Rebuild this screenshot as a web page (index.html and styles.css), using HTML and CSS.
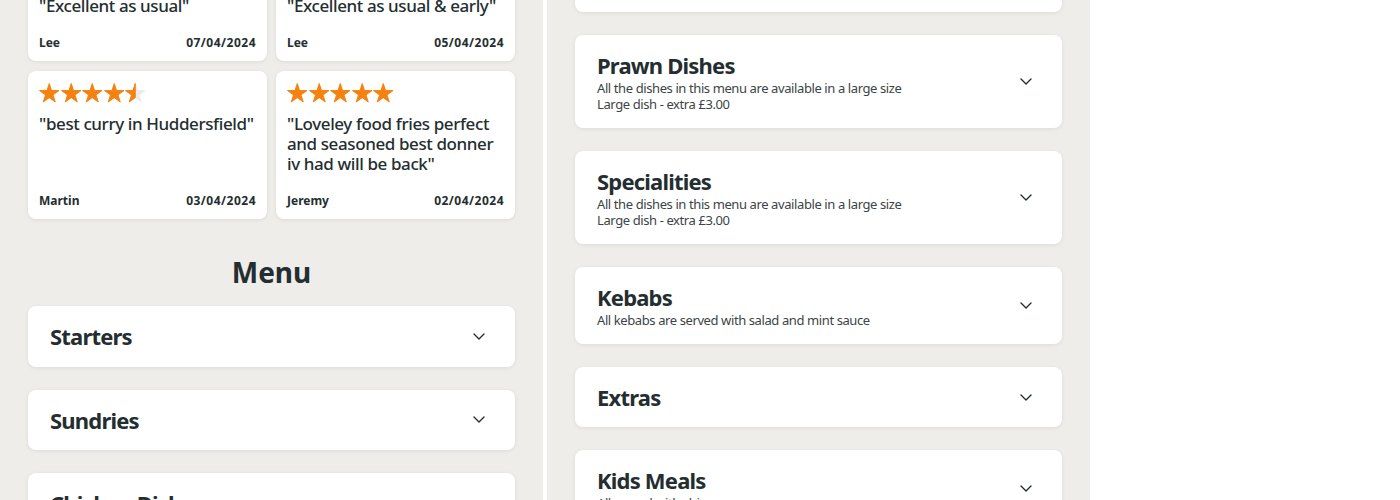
FILE: index.html
```html
<!DOCTYPE html>
<html lang="en">
<head>
<meta charset="utf-8">
<title>Menu</title>
<link rel="stylesheet" href="styles.css">
</head>
<body>
<div class="page">
  <section class="panel panel-left">
    <div class="reviews">
      <article class="review">
        <div class="stars">
          <svg class="star" viewBox="-0.5 -0.5 21 20"><path d="M10 0L12.36 7.26H20L13.81 11.74L16.17 19L10 14.51L3.83 19L6.19 11.74L0 7.26H7.64Z"/></svg>
          <svg class="star" viewBox="-0.5 -0.5 21 20"><path d="M10 0L12.36 7.26H20L13.81 11.74L16.17 19L10 14.51L3.83 19L6.19 11.74L0 7.26H7.64Z"/></svg>
          <svg class="star" viewBox="-0.5 -0.5 21 20"><path d="M10 0L12.36 7.26H20L13.81 11.74L16.17 19L10 14.51L3.83 19L6.19 11.74L0 7.26H7.64Z"/></svg>
          <svg class="star" viewBox="-0.5 -0.5 21 20"><path d="M10 0L12.36 7.26H20L13.81 11.74L16.17 19L10 14.51L3.83 19L6.19 11.74L0 7.26H7.64Z"/></svg>
          <svg class="star" viewBox="-0.5 -0.5 21 20"><path d="M10 0L12.36 7.26H20L13.81 11.74L16.17 19L10 14.51L3.83 19L6.19 11.74L0 7.26H7.64Z"/></svg>
        </div>
        <p class="review-text">"Excellent as usual"</p>
        <div class="review-meta"><span class="review-name">Lee</span><span class="review-date">07/04/2024</span></div>
      </article>
      <article class="review">
        <div class="stars">
          <svg class="star" viewBox="-0.5 -0.5 21 20"><path d="M10 0L12.36 7.26H20L13.81 11.74L16.17 19L10 14.51L3.83 19L6.19 11.74L0 7.26H7.64Z"/></svg>
          <svg class="star" viewBox="-0.5 -0.5 21 20"><path d="M10 0L12.36 7.26H20L13.81 11.74L16.17 19L10 14.51L3.83 19L6.19 11.74L0 7.26H7.64Z"/></svg>
          <svg class="star" viewBox="-0.5 -0.5 21 20"><path d="M10 0L12.36 7.26H20L13.81 11.74L16.17 19L10 14.51L3.83 19L6.19 11.74L0 7.26H7.64Z"/></svg>
          <svg class="star" viewBox="-0.5 -0.5 21 20"><path d="M10 0L12.36 7.26H20L13.81 11.74L16.17 19L10 14.51L3.83 19L6.19 11.74L0 7.26H7.64Z"/></svg>
          <svg class="star" viewBox="-0.5 -0.5 21 20"><path d="M10 0L12.36 7.26H20L13.81 11.74L16.17 19L10 14.51L3.83 19L6.19 11.74L0 7.26H7.64Z"/></svg>
        </div>
        <p class="review-text">"Excellent as usual &amp; early"</p>
        <div class="review-meta"><span class="review-name">Lee</span><span class="review-date">05/04/2024</span></div>
      </article>
      <article class="review">
        <div class="stars">
          <svg class="star" viewBox="-0.5 -0.5 21 20"><path d="M10 0L12.36 7.26H20L13.81 11.74L16.17 19L10 14.51L3.83 19L6.19 11.74L0 7.26H7.64Z"/></svg>
          <svg class="star" viewBox="-0.5 -0.5 21 20"><path d="M10 0L12.36 7.26H20L13.81 11.74L16.17 19L10 14.51L3.83 19L6.19 11.74L0 7.26H7.64Z"/></svg>
          <svg class="star" viewBox="-0.5 -0.5 21 20"><path d="M10 0L12.36 7.26H20L13.81 11.74L16.17 19L10 14.51L3.83 19L6.19 11.74L0 7.26H7.64Z"/></svg>
          <svg class="star" viewBox="-0.5 -0.5 21 20"><path d="M10 0L12.36 7.26H20L13.81 11.74L16.17 19L10 14.51L3.83 19L6.19 11.74L0 7.26H7.64Z"/></svg>
          <svg class="star" viewBox="-0.5 -0.5 21 20"><path class="star-empty" d="M10 0L12.36 7.26H20L13.81 11.74L16.17 19L10 14.51L3.83 19L6.19 11.74L0 7.26H7.64Z"/><path d="M10 0V14.51L3.83 19L6.19 11.74L0 7.26H7.64Z"/></svg>
        </div>
        <p class="review-text">"best curry in Huddersfield"</p>
        <div class="review-meta"><span class="review-name">Martin</span><span class="review-date">03/04/2024</span></div>
      </article>
      <article class="review">
        <div class="stars">
          <svg class="star" viewBox="-0.5 -0.5 21 20"><path d="M10 0L12.36 7.26H20L13.81 11.74L16.17 19L10 14.51L3.83 19L6.19 11.74L0 7.26H7.64Z"/></svg>
          <svg class="star" viewBox="-0.5 -0.5 21 20"><path d="M10 0L12.36 7.26H20L13.81 11.74L16.17 19L10 14.51L3.83 19L6.19 11.74L0 7.26H7.64Z"/></svg>
          <svg class="star" viewBox="-0.5 -0.5 21 20"><path d="M10 0L12.36 7.26H20L13.81 11.74L16.17 19L10 14.51L3.83 19L6.19 11.74L0 7.26H7.64Z"/></svg>
          <svg class="star" viewBox="-0.5 -0.5 21 20"><path d="M10 0L12.36 7.26H20L13.81 11.74L16.17 19L10 14.51L3.83 19L6.19 11.74L0 7.26H7.64Z"/></svg>
          <svg class="star" viewBox="-0.5 -0.5 21 20"><path d="M10 0L12.36 7.26H20L13.81 11.74L16.17 19L10 14.51L3.83 19L6.19 11.74L0 7.26H7.64Z"/></svg>
        </div>
        <p class="review-text">"Loveley food fries perfect and seasoned best donner iv had will be back"</p>
        <div class="review-meta"><span class="review-name">Jeremy</span><span class="review-date">02/04/2024</span></div>
      </article>
    </div>

    <h2 class="menu-title">Menu</h2>

    <div class="categories">
      <div class="category">
        <div class="category-info"><h3 class="category-name">Starters</h3></div>
        <svg class="chevron" viewBox="0 0 12 7"><path d="M1 1l5 5 5-5"/></svg>
      </div>
      <div class="category">
        <div class="category-info"><h3 class="category-name">Sundries</h3></div>
        <svg class="chevron" viewBox="0 0 12 7"><path d="M1 1l5 5 5-5"/></svg>
      </div>
      <div class="category">
        <div class="category-info"><h3 class="category-name">Chicken Dishes</h3></div>
        <svg class="chevron" viewBox="0 0 12 7"><path d="M1 1l5 5 5-5"/></svg>
      </div>
    </div>
  </section>

  <section class="panel panel-right">
    <div class="categories categories-scrolled">
      <div class="category">
        <div class="category-info">
          <h3 class="category-name">Lamb Dishes</h3>
          <p class="category-desc">All the dishes in this menu are available in a large size<br>Large dish - extra £3.00</p>
        </div>
        <svg class="chevron" viewBox="0 0 12 7"><path d="M1 1l5 5 5-5"/></svg>
      </div>
      <div class="category">
        <div class="category-info">
          <h3 class="category-name">Prawn Dishes</h3>
          <p class="category-desc">All the dishes in this menu are available in a large size<br>Large dish - extra £3.00</p>
        </div>
        <svg class="chevron" viewBox="0 0 12 7"><path d="M1 1l5 5 5-5"/></svg>
      </div>
      <div class="category">
        <div class="category-info">
          <h3 class="category-name">Specialities</h3>
          <p class="category-desc">All the dishes in this menu are available in a large size<br>Large dish - extra £3.00</p>
        </div>
        <svg class="chevron" viewBox="0 0 12 7"><path d="M1 1l5 5 5-5"/></svg>
      </div>
      <div class="category">
        <div class="category-info">
          <h3 class="category-name">Kebabs</h3>
          <p class="category-desc">All kebabs are served with salad and mint sauce</p>
        </div>
        <svg class="chevron" viewBox="0 0 12 7"><path d="M1 1l5 5 5-5"/></svg>
      </div>
      <div class="category">
        <div class="category-info"><h3 class="category-name">Extras</h3></div>
        <svg class="chevron" viewBox="0 0 12 7"><path d="M1 1l5 5 5-5"/></svg>
      </div>
      <div class="category">
        <div class="category-info">
          <h3 class="category-name">Kids Meals</h3>
          <p class="category-desc">All served with chips</p>
        </div>
        <svg class="chevron" viewBox="0 0 12 7"><path d="M1 1l5 5 5-5"/></svg>
      </div>
    </div>
  </section>

  <aside class="blank"></aside>
</div>
</body>
</html>
```

FILE: styles.css
```css
* { box-sizing: border-box; }

html, body {
  margin: 0;
  padding: 0;
  background: #ffffff;
}

body {
  font-family: "Noto Sans", "Open Sans", sans-serif;
  color: #242e30;
}

.page {
  display: flex;
  height: 500px;
  overflow: hidden;
  gap: 4px;
}

.panel {
  width: 543px;
  flex: 0 0 543px;
  background: #efedea;
  padding: 0 28px;
  overflow: hidden;
}

.blank {
  flex: 1;
}

/* Reviews */
.reviews {
  margin-top: -47px;
  display: grid;
  grid-template-columns: 1fr 1fr;
  column-gap: 9px;
  row-gap: 10px;
}

.review {
  background: #fff;
  border-radius: 8px;
  box-shadow: 0 1px 4px rgba(0, 0, 0, 0.08);
  padding: 12px 11px 10px 11px;
  display: flex;
  flex-direction: column;
}

.stars {
  display: flex;
  gap: 1px;
  height: 20px;
  margin-bottom: 11px;
}

.star {
  width: 20.5px;
  height: 19.5px;
  fill: #f5820f;
  stroke: #f5820f;
  stroke-width: 1;
  stroke-linejoin: round;
}

.star .star-empty {
  fill: #ebebeb;
  stroke: #ebebeb;
}

.review-text {
  margin: 0;
  font-size: 17px;
  line-height: 20px;
  font-weight: 500;
  letter-spacing: -0.4px;
  flex: 1;
}

.review-meta {
  margin-top: 19px;
  display: flex;
  justify-content: space-between;
  font-size: 12px;
  line-height: 16px;
  font-weight: 700;
}

.review-date {
  letter-spacing: 0.5px;
}

/* Menu */
.menu-title {
  margin: 33px 0 14px;
  text-align: center;
  font-size: 28px;
  line-height: 40px;
  font-weight: 700;
}

.categories {
  display: flex;
  flex-direction: column;
  gap: 23px;
}

.categories-scrolled {
  margin-top: -81px;
}

.category {
  background: #fff;
  border-radius: 8px;
  box-shadow: 0 1px 4px rgba(0, 0, 0, 0.08);
  padding: 16px 30px 16px 22px;
  display: flex;
  align-items: center;
  justify-content: space-between;
}

.category-name {
  margin: 0;
  font-size: 22px;
  line-height: 28.5px;
  font-weight: 700;
  letter-spacing: -0.8px;
}

.category-desc {
  margin: 0;
  font-size: 13px;
  line-height: 16.25px;
  letter-spacing: -0.4px;
  color: #3b4446;
}

.chevron {
  width: 12px;
  height: 7px;
  fill: none;
  stroke: #242e30;
  stroke-width: 1.4;
  stroke-linecap: round;
  stroke-linejoin: round;
  flex: 0 0 auto;
}
```
